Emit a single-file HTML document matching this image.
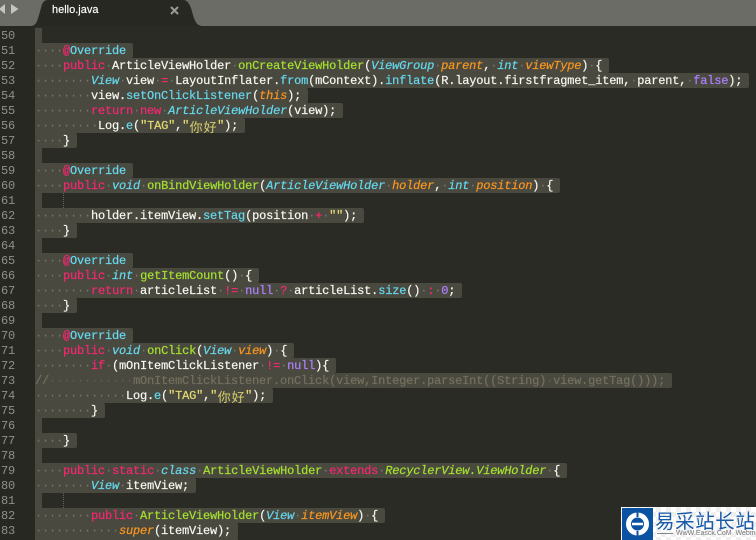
<!DOCTYPE html>
<html><head><meta charset="utf-8">
<style>
html,body{margin:0;padding:0;background:#2a2b25;width:756px;height:540px;overflow:hidden}
#gutter{position:absolute;left:0;top:26px;width:35px;height:514px;background:#272822}
#bar{position:absolute;left:0;top:0;width:756px;height:26px;background:#6c6c66}
.n{position:absolute;left:1px;font:12px/17px "Liberation Mono",monospace;letter-spacing:-.2px;color:#8f908a;width:16px;height:15px}
.l{position:absolute;left:35px;height:15px;font:12px/17px "Liberation Mono",monospace;letter-spacing:-.2px;color:#f8f8f2;white-space:pre;-webkit-text-stroke:.2px}
.b{display:inline-block;height:15px;background:#494940;padding-right:7px;border-radius:0 2px 2px 0;vertical-align:top}
.e{display:block;width:7px;height:15px;background:#494940}
.k{color:#f92672}.t{color:#66d9ef;font-style:italic}.c{color:#66d9ef}.f{color:#a6e22e}.i{color:#a6e22e;font-style:italic}
.p{color:#fd971f;font-style:italic}.s{color:#e6db74}.m{color:#ae81ff}.d{color:#77776e;-webkit-text-stroke:0}.o{color:#75715e}
.z{display:inline-block;width:14px;letter-spacing:0;text-align:center;font:13px/17px "Noto Sans CJK SC","WenQuanYi Zen Hei",sans-serif;color:#d8ce6c;vertical-align:top;-webkit-text-stroke:0}
.g{position:absolute;left:63px;width:0;height:15px;border-left:1px dotted #66665e}
</style></head><body>
<div id="bar"></div>
<svg style="position:absolute;left:0;top:0" width="210" height="26">
<path d="M30 26 C36 26 37 22 39 15 L41 8 C42 3 44 0 48 0 L183 0 C187 0 189 3 191 8 L193 15 C195 22 197 26 203 26 Z" fill="#272822"/>
<path d="M-1 9 L5 4 L5 14 Z" fill="#c4c4c0"/>
<path d="M11 4 L18.500 9 L11 14 Z" fill="#c4c4c0"/>
<path d="M171 7 L178 14 M178 7 L171 14" stroke="#9a9a94" stroke-width="2"/>
</svg>
<div style="position:absolute;left:52px;top:3px;font:11px/15px 'Liberation Sans',sans-serif;color:#fff;white-space:pre;-webkit-text-stroke:.15px">hello.java</div>
<div id="gutter"></div>

<div class="n" style="top:28px">50</div><div class="n" style="top:43px">51</div><div class="n" style="top:58px">52</div><div class="n" style="top:73px">53</div><div class="n" style="top:88px">54</div><div class="n" style="top:103px">55</div><div class="n" style="top:118px">56</div><div class="n" style="top:133px">57</div><div class="n" style="top:148px">58</div><div class="n" style="top:163px">59</div><div class="n" style="top:178px">60</div><div class="n" style="top:193px">61</div><div class="n" style="top:208px">62</div><div class="n" style="top:223px">63</div><div class="n" style="top:238px">64</div><div class="n" style="top:253px">65</div><div class="n" style="top:268px">66</div><div class="n" style="top:283px">67</div><div class="n" style="top:298px">68</div><div class="n" style="top:313px">69</div><div class="n" style="top:328px">70</div><div class="n" style="top:343px">71</div><div class="n" style="top:358px">72</div><div class="n" style="top:373px">73</div><div class="n" style="top:388px">74</div><div class="n" style="top:403px">75</div><div class="n" style="top:418px">76</div><div class="n" style="top:433px">77</div><div class="n" style="top:448px">78</div><div class="n" style="top:463px">79</div><div class="n" style="top:478px">80</div><div class="n" style="top:493px">81</div><div class="n" style="top:508px">82</div><div class="n" style="top:523px">83</div>

<div class="l" style="top:28px"><span class="e"></span></div>
<div class="l" style="top:43px"><span class="b"><span class="d">····</span><span class="k">@</span><span class="c">Override</span></span></div>
<div class="l" style="top:58px"><span class="b"><span class="d">····</span><span class="k">public</span><span class="d">·</span>ArticleViewHolder<span class="d">·</span><span class="f">onCreateViewHolder</span>(<span class="t">ViewGroup</span><span class="d">·</span><span class="p">parent</span>,<span class="d">·</span><span class="t">int</span><span class="d">·</span><span class="p">viewType</span>)<span class="d">·</span>{</span></div>
<div class="l" style="top:73px"><span class="b"><span class="d">········</span><span class="t">View</span><span class="d">·</span>view<span class="d">·</span><span class="k">=</span><span class="d">·</span>LayoutInflater.<span class="c">from</span>(mContext).<span class="c">inflate</span>(R.layout.firstfragmet_item,<span class="d">·</span>parent,<span class="d">·</span><span class="m">false</span>);</span></div>
<div class="l" style="top:88px"><span class="b"><span class="d">········</span>view.<span class="c">setOnClickListener</span>(<span class="p">this</span>);</span></div>
<div class="l" style="top:103px"><span class="b"><span class="d">········</span><span class="k">return</span><span class="d">·</span><span class="k">new</span><span class="d">·</span><span class="t">ArticleViewHolder</span>(view);</span></div>
<div class="l" style="top:118px"><span class="b"><span class="d">·········</span>Log.<span class="c">e</span>(<span class="s">"TAG"</span>,<span class="s">"</span><span class="z">你</span><span class="z">好</span><span class="s">"</span>);</span></div>
<div class="l" style="top:133px"><span class="b"><span class="d">····</span>}</span></div>
<div class="l" style="top:148px"><span class="e"></span></div>
<div class="l" style="top:163px"><span class="b"><span class="d">····</span><span class="k">@</span><span class="c">Override</span></span></div>
<div class="l" style="top:178px"><span class="b"><span class="d">····</span><span class="k">public</span><span class="d">·</span><span class="t">void</span><span class="d">·</span><span class="f">onBindViewHolder</span>(<span class="t">ArticleViewHolder</span><span class="d">·</span><span class="p">holder</span>,<span class="d">·</span><span class="t">int</span><span class="d">·</span><span class="p">position</span>)<span class="d">·</span>{</span></div>
<div class="l" style="top:193px"><span class="e"></span></div><div class="g" style="top:193px"></div>
<div class="l" style="top:208px"><span class="b"><span class="d">········</span>holder.itemView.<span class="c">setTag</span>(position<span class="d">·</span><span class="k">+</span><span class="d">·</span><span class="s">""</span>);</span></div>
<div class="l" style="top:223px"><span class="b"><span class="d">····</span>}</span></div>
<div class="l" style="top:238px"><span class="e"></span></div>
<div class="l" style="top:253px"><span class="b"><span class="d">····</span><span class="k">@</span><span class="c">Override</span></span></div>
<div class="l" style="top:268px"><span class="b"><span class="d">····</span><span class="k">public</span><span class="d">·</span><span class="t">int</span><span class="d">·</span><span class="f">getItemCount</span>()<span class="d">·</span>{</span></div>
<div class="l" style="top:283px"><span class="b"><span class="d">········</span><span class="k">return</span><span class="d">·</span>articleList<span class="d">·</span><span class="k">!=</span><span class="d">·</span><span class="m">null</span><span class="d">·</span><span class="k">?</span><span class="d">·</span>articleList.<span class="c">size</span>()<span class="d">·</span><span class="k">:</span><span class="d">·</span><span class="m">0</span>;</span></div>
<div class="l" style="top:298px"><span class="b"><span class="d">····</span>}</span></div>
<div class="l" style="top:313px"><span class="e"></span></div>
<div class="l" style="top:328px"><span class="b"><span class="d">····</span><span class="k">@</span><span class="c">Override</span></span></div>
<div class="l" style="top:343px"><span class="b"><span class="d">····</span><span class="k">public</span><span class="d">·</span><span class="t">void</span><span class="d">·</span><span class="f">onClick</span>(<span class="t">View</span><span class="d">·</span><span class="p">view</span>)<span class="d">·</span>{</span></div>
<div class="l" style="top:358px"><span class="b"><span class="d">········</span><span class="k">if</span><span class="d">·</span>(mOnItemClickListener<span class="d">·</span><span class="k">!=</span><span class="d">·</span><span class="m">null</span>){</span></div>
<div class="l" style="top:373px"><span class="b o">//<span class="d" style="color:#5f5f56">············</span>mOnItemClickListener.onClick(view,Integer.parseInt((String)<span class="d" style="color:#5f5f56">·</span>view.getTag()));</span></div>
<div class="l" style="top:388px"><span class="b"><span class="d">·············</span>Log.<span class="c">e</span>(<span class="s">"TAG"</span>,<span class="s">"</span><span class="z">你</span><span class="z">好</span><span class="s">"</span>);</span></div>
<div class="l" style="top:403px"><span class="b"><span class="d">········</span>}</span></div>
<div class="l" style="top:418px"><span class="e"></span></div>
<div class="l" style="top:433px"><span class="b"><span class="d">····</span>}</span></div>
<div class="l" style="top:448px"><span class="e"></span></div>
<div class="l" style="top:463px"><span class="b"><span class="d">····</span><span class="k">public</span><span class="d">·</span><span class="k">static</span><span class="d">·</span><span class="t">class</span><span class="d">·</span><span class="f">ArticleViewHolder</span><span class="d">·</span><span class="k">extends</span><span class="d">·</span><span class="i">RecyclerView.ViewHolder</span><span class="d">·</span>{</span></div>
<div class="l" style="top:478px"><span class="b"><span class="d">········</span><span class="t">View</span><span class="d">·</span>itemView;</span></div>
<div class="l" style="top:493px"><span class="e"></span></div><div class="g" style="top:493px"></div>
<div class="l" style="top:508px"><span class="b"><span class="d">········</span><span class="k">public</span><span class="d">·</span><span class="f">ArticleViewHolder</span>(<span class="t">View</span><span class="d">·</span><span class="p">itemView</span>)<span class="d">·</span>{</span></div>
<div class="l" style="top:523px"><span class="b"><span class="d">············</span><span class="p">super</span>(itemView);</span></div>
<div style="position:absolute;left:35px;top:538px;width:203px;height:2px;background:#494940"></div>

<div style="position:absolute;left:621px;top:507px;width:135px;height:33px;background:#fff;background-image:conic-gradient(#efefef 25%,#fff 0 50%,#efefef 0 75%,#fff 0);background-size:10px 10px"></div>
<div style="position:absolute;left:622px;top:508px;width:31px;height:32px;background:#0b52a3"></div>
<svg style="position:absolute;left:622px;top:508px" width="31" height="32">
<circle cx="15.500" cy="16" r="9" fill="none" stroke="#fff" stroke-width="5"/>
<path d="M10 16 L21 16" stroke="#fff" stroke-width="2.500"/>
<path d="M15.500 9 V4 M15.500 23 V28" stroke="#0b52a3" stroke-width="2"/>
</svg>
<div style="position:absolute;left:655px;top:508px;width:101px;font:19.500px/24px 'Noto Sans CJK SC','WenQuanYi Zen Hei',sans-serif;color:#1a5ba8;white-space:pre;letter-spacing:.6px">易采站长站</div>
<div style="position:absolute;left:657px;top:533px;width:16px;height:1px;background:#888"></div>
<div style="position:absolute;left:676px;top:530px;font:7px/8px 'Liberation Sans',sans-serif;color:#777;white-space:pre">WwW.Easck.CoM  Webmaster</div>
</body></html>
